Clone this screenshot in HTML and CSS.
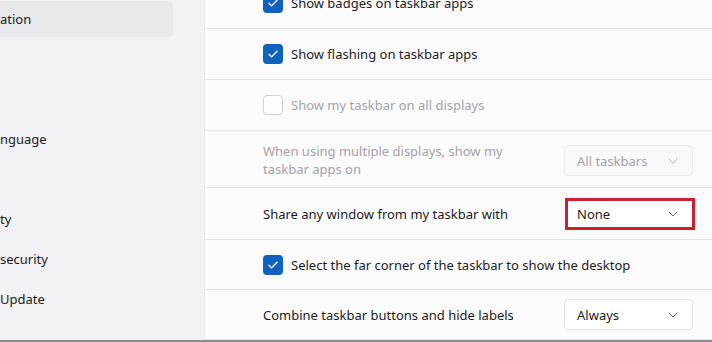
FILE: index.html
```html
<!DOCTYPE html>
<html lang="en">
<head>
<meta charset="UTF-8">
<meta name="viewport" content="width=device-width, initial-scale=1.0">
<title>Taskbar behaviors</title>
<link rel="stylesheet" href="styles.css">
</head>
<body>

<div class="window">
    <!-- left navigation, scrolled off to the left -->
    <div class="sidebar">
        <div class="nav-item selected">ation</div>
        <div class="nav-item"></div>
        <div class="nav-item"></div>
        <div class="nav-item">nguage</div>
        <div class="nav-item"></div>
        <div class="nav-item">ty</div>
        <div class="nav-item">security</div>
        <div class="nav-item">Update</div>
    </div>

    <!-- taskbar behaviors list -->
    <div class="panel">
        <div class="rows">
            <div class="row">
                <span class="checkbox checked">
                    <svg viewBox="0 0 20 20" width="20" height="20"><path d="M6 10.3l2.6 2.6 5.4-5.6" /></svg>
                </span>
                <span class="label">Show badges on taskbar apps</span>
            </div>
            <div class="row">
                <span class="checkbox checked">
                    <svg viewBox="0 0 20 20" width="20" height="20"><path d="M6 10.3l2.6 2.6 5.4-5.6" /></svg>
                </span>
                <span class="label">Show flashing on taskbar apps</span>
            </div>
            <div class="row disabled">
                <span class="checkbox"></span>
                <span class="label">Show my taskbar on all displays</span>
            </div>
            <div class="row row-tall disabled">
                <span class="label wrap">When using multiple displays, show my taskbar apps on</span>
                <div class="dropdown">
                    <span>All taskbars</span>
                    <svg viewBox="0 0 10 6" width="10" height="6"><path d="M1 1l4 4 4-4" /></svg>
                </div>
            </div>
            <div class="row row-share">
                <span class="label">Share any window from my taskbar with</span>
                <div class="dropdown highlight">
                    <span>None</span>
                    <svg viewBox="0 0 10 6" width="10" height="6"><path d="M1 1l4 4 4-4" /></svg>
                </div>
            </div>
            <div class="row row-short">
                <span class="checkbox checked">
                    <svg viewBox="0 0 20 20" width="20" height="20"><path d="M6 10.3l2.6 2.6 5.4-5.6" /></svg>
                </span>
                <span class="label">Select the far corner of the taskbar to show the desktop</span>
            </div>
            <div class="row row-short">
                <span class="label">Combine taskbar buttons and hide labels</span>
                <div class="dropdown">
                    <span>Always</span>
                    <svg viewBox="0 0 10 6" width="10" height="6"><path d="M1 1l4 4 4-4" /></svg>
                </div>
            </div>
        </div>
    </div>
</div>

</body>
</html>
```

FILE: styles.css
```css
body {
    margin: 0;
    font-family: "Noto Sans", "Open Sans", sans-serif;
    font-size: 13px;
    color: #1b1b1b;
    background-color: #fbfbfd;
    overflow: hidden;
}
.window {
    display: flex;
    height: 340px;
    border-bottom: 2px solid #8c8c8c;
    overflow: hidden;
}
.sidebar {
    width: 204px;
    flex-shrink: 0;
    background-color: #f2f2f6;
    border-right: 1px solid #e8e8ec;
    padding-top: 1px;
    display: flex;
    flex-direction: column;
    gap: 4px;
}
.nav-item {
    height: 36px;
    width: 173px;
    display: flex;
    align-items: center;
    border-radius: 0 5px 5px 0;
}
.nav-item.selected {
    background-color: #e9e9ed;
}
.panel {
    flex: 1;
    background-color: #fbfbfd;
}
.rows {
    margin-top: -22px; /* list is scrolled */
}
.row {
    display: flex;
    align-items: center;
    height: 50px;
    padding: 0 19px 0 58px;
    border-bottom: 1px solid #e5e5e9;
}
.row-tall {
    height: 56px;
    padding-top: 3px;
    box-sizing: border-box;
    height: 57px;
}
.row-share {
    height: 51px;
}
.row-short {
    height: 49px;
}
.label.wrap {
    max-width: 260px;
    line-height: 18px;
    margin-top: -2px;
}
.checkbox {
    width: 18px;
    height: 18px;
    border: 1px solid #c4c4c8;
    border-radius: 4px;
    margin-right: 8px;
    flex-shrink: 0;
    background-color: #fdfdfe;
    display: flex;
}
.checkbox.checked {
    width: 20px;
    height: 20px;
    border: none;
    background-color: #0f62be;
}
.checkbox svg path {
    fill: none;
    stroke: #fff;
    stroke-width: 1.3;
    stroke-linecap: round;
    stroke-linejoin: round;
}
.disabled {
    color: #a3a3a6;
}
.disabled .checkbox {
    border-color: #d0d0d4;
}
.dropdown {
    margin-left: auto;
    width: 129px;
    height: 31px;
    box-sizing: border-box;
    border: 1px solid #e3e3e7;
    border-radius: 4px;
    background-color: #fff;
    display: flex;
    align-items: center;
    justify-content: space-between;
    padding: 0 14px 0 12px;
    flex-shrink: 0;
}
.disabled .dropdown {
    background-color: #f9f9fb;
    border-color: #ececf0;
}
.dropdown.highlight {
    width: 130px;
    height: 32px;
    margin-right: -2px;
    border: 3px solid #c8232c;
    border-radius: 0;
    padding: 0 14px 0 9px;
}
.dropdown svg path {
    fill: none;
    stroke: #6a6a6e;
    stroke-width: 1;
}
.disabled .dropdown svg path {
    stroke: #b0b0b4;
}
```
